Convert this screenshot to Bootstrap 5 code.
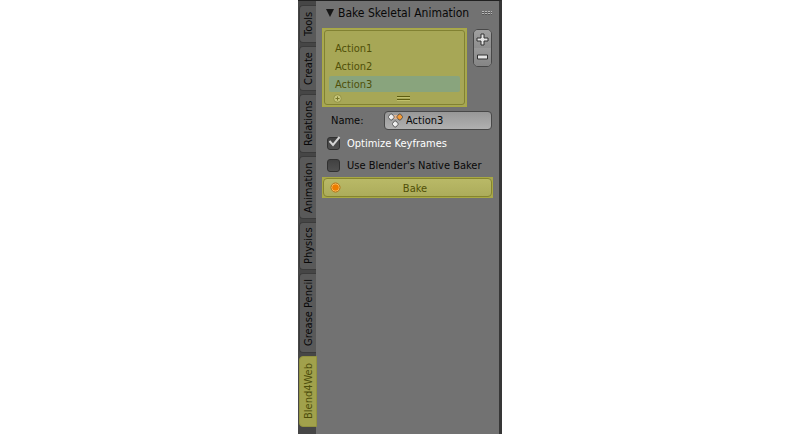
<!DOCTYPE html>
<html lang="en">
<head>
<meta charset="utf-8">
<meta name="viewport" content="width=device-width, initial-scale=1">
<title>Bake Skeletal Animation</title>
<link href="https://cdn.jsdelivr.net/npm/bootstrap@5.3.0/dist/css/bootstrap.min.css" rel="stylesheet">
<style>
body { background: #fff; color: #080808; font-family: "DejaVu Sans Condensed", "DejaVu Sans", sans-serif; font-size: 11px; line-height: 14px; }
button, input { font: inherit; color: inherit; }
.tool-shelf { width: 204px; background: #727272; border-top: 1px solid #202020; border-right: 3px solid #363636; }
.tab-strip { width: 18px; background: #464646; padding: 4px 0 6px 1px; gap: 3px; }
.tab-strip button { flex-shrink: 0; writing-mode: vertical-rl; transform: rotate(180deg); width: 17px; padding: 0; line-height: 15px; background: #595959; border: 1px solid #3b3b3b; border-left: 0; border-radius: 0 4px 4px 0; white-space: nowrap; }
.tab-tools { height: 38px; } .tab-create { height: 45px; } .tab-relations { height: 59px; }
.tab-animation { height: 63px; } .tab-physics { height: 48px; } .tab-grease { height: 80px; }
.tab-strip .tab-blend { height: 71px; width: 18px; background: #a1a14c; color: #4d4d0b; border: 1px solid #92923f; }
.panel-body { padding: 5px 6px 0; }
.panel-title { font-size: 12px; padding: 0 1px 0 4px; height: 14px; margin-bottom: 8px; }
.panel-title button { gap: 4px; }
.glow { background: #a7a756; padding: 1px; border: 1px solid #a9a942; color: #505008; }
.list-glow { margin-right: 6px; }
.action-list { border: 1px solid #818132; border-radius: 3px; padding: 9px 4px 0; }
.action-list .entry { display: block; width: 100%; height: 16px; margin-bottom: 2px; padding: 2px 6px 0; border: 0; border-radius: 2px; background: transparent; text-align: left; }
.action-list .entry.chosen { background: #89a47d; margin-bottom: 0; }
.list-foot { height: 12px; padding: 0 4px; }
.list-foot .grip { margin-right: 46px; }
.stepper { width: 19px; height: 38px; margin: 1px 1px 0 0; border: 1px solid #484848; border-radius: 5px; overflow: hidden; background: #8b8b8b; }
.stepper button { height: 18px; border: 0; padding: 0; background: linear-gradient(#a0a0a0, #8e8e8e); }
.stepper button + button { background: linear-gradient(#999, #858585); }
.name-row { margin: 4px 1px 0 9px; }
.name-field { width: 108px; height: 19px; border: 1px solid #484848; border-radius: 4px; background: linear-gradient(#989898, #b0b0b0); padding: 0 3px; gap: 3px; }
.name-field input { min-width: 0; background: transparent; border: 0; padding: 0; outline: 0; }
.option { gap: 7px; height: 14px; margin: 6px 0 8px 5px; }
.option input { appearance: none; width: 13px; height: 13px; margin: 0; border: 1px solid #303030; border-radius: 3px; background: linear-gradient(#414141, #505050); }
.option label { padding-top: 2px; }
.option svg { left: 0; top: -1px; pointer-events: none; }
.bake-glow { margin-top: -3px; }
.bake-btn { height: 19px; padding: 0 6px; border: 1px solid #85852e; border-radius: 4px; background: linear-gradient(#b9b967, #acac5b); color: #505008; }
.bake-btn span { padding: 2px 0 0 4px; }
</style>
<script src="https://cdn.jsdelivr.net/npm/bootstrap@5.3.0/dist/js/bootstrap.bundle.min.js"></script>
</head>
<body>
<main class="tool-shelf d-flex min-vh-100 mx-auto">
  <nav class="tab-strip d-flex flex-column flex-shrink-0" aria-label="Tool tabs">
    <button type="button" class="tab-tools">Tools</button>
    <button type="button" class="tab-create">Create</button>
    <button type="button" class="tab-relations">Relations</button>
    <button type="button" class="tab-animation">Animation</button>
    <button type="button" class="tab-physics">Physics</button>
    <button type="button" class="tab-grease">Grease Pencil</button>
    <button type="button" class="tab-blend" aria-current="true">Blend4Web</button>
  </nav>
  <section class="panel-body flex-grow-1">
    <div class="panel-title d-flex align-items-center justify-content-between">
      <button type="button" class="d-flex align-items-center p-0 border-0 bg-transparent text-nowrap" aria-expanded="true">
        <svg width="8" height="8" aria-hidden="true"><path d="M0 0h8L4 8z" fill="#171717"/></svg>Bake Skeletal Animation
      </button>
      <svg width="10" height="4" aria-hidden="true"><path d="M0 .5h10M0 2.5h10" stroke="#b8b8b8" stroke-dasharray="2 1"/><path d="M0 1.5h10M0 3.5h10" stroke="#555" stroke-dasharray="2 1"/></svg>
    </div>
    <div class="d-flex align-items-start justify-content-between">
      <div class="glow list-glow flex-grow-1">
        <div class="action-list">
          <button type="button" class="entry">Action1</button>
          <button type="button" class="entry">Action2</button>
          <button type="button" class="entry chosen" aria-pressed="true">Action3</button>
          <div class="list-foot d-flex align-items-center justify-content-between">
            <svg width="9" height="9" aria-hidden="true"><circle cx="4.5" cy="4.5" r="3.8" fill="#c6c67a" stroke="#8b8b40" stroke-width=".8"/><path d="M4.5 2.5v4M2.5 4.5h4" stroke="#777729"/></svg>
            <svg class="grip" width="13" height="6" aria-hidden="true"><path d="M0 1.5h13M0 4.5h13" stroke="#5d5d10"/><path d="M0 2.5h13M0 5.5h13" stroke="#c1c16c"/></svg>
          </div>
        </div>
      </div>
      <div class="stepper d-flex flex-column flex-shrink-0">
        <button type="button" class="d-flex align-items-center justify-content-center" aria-label="Add action"><svg width="13" height="13"><path d="M5 1h3v4h4v3H8v4H5V8H1V5h4z" fill="#e5e5e5" stroke="#303030"/></svg></button>
        <button type="button" class="d-flex align-items-center justify-content-center" aria-label="Remove action"><svg width="13" height="6"><path d="M1.5 1h10v4h-10z" fill="#e5e5e5" stroke="#303030"/></svg></button>
      </div>
    </div>
    <div class="name-row d-flex align-items-center justify-content-between">
      <label for="actionName">Name:</label>
      <div class="name-field d-flex align-items-center">
        <svg class="flex-shrink-0" width="15" height="15" viewBox="0 0 15 15" aria-hidden="true"><path d="M3 2h9v4H3z" fill="#dfb391"/><g stroke="#444" stroke-width=".8" stroke-linejoin="round"><path d="M2.5 1H4L6 3.500v1L4 7H2.500L.5 4.500v-1z" fill="#eee"/><path d="M11 1h1.500l2 2.500v1L12.500 7H11L9 4.500v-1z" fill="#f39a36"/><path d="M6.500 8H8l2 2.500v1L8 14H6.500l-2-2.500v-1z" fill="#eee"/></g></svg>
        <input id="actionName" class="flex-grow-1" type="text" value="Action3">
      </div>
    </div>
    <div class="option d-flex align-items-center position-relative text-white">
      <input type="checkbox" id="optimize" checked><label for="optimize" class="text-nowrap">Optimize Keyframes</label>
      <svg class="position-absolute" width="14" height="13" aria-hidden="true"><path d="M2.5 6 6 10 12.5 2" fill="none" stroke="#d4d4d4" stroke-width="2"/></svg>
    </div>
    <div class="option d-flex align-items-center">
      <input type="checkbox" id="native"><label for="native" class="text-nowrap">Use Blender's Native Baker</label>
    </div>
    <div class="glow bake-glow p-0">
      <button type="button" class="bake-btn d-flex align-items-center w-100">
        <svg width="11" height="11" aria-hidden="true"><circle cx="5.5" cy="5.5" r="4.5" fill="#ffd075" stroke="#b36d10"/><circle cx="5.5" cy="5.5" r="3.3" fill="#ee7c00"/></svg>
        <span class="flex-grow-1">Bake</span>
      </button>
    </div>
  </section>
</main>
</body>
</html>
